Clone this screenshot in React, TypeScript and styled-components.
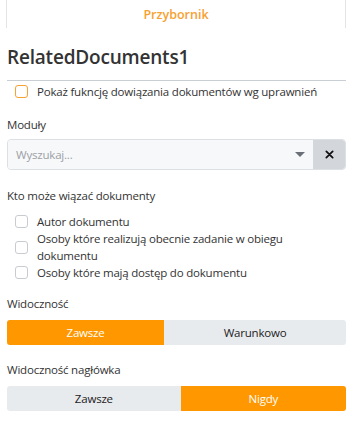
import React from 'react';
import styled, {createGlobalStyle} from 'styled-components';

const GlobalStyle = createGlobalStyle`
  html, body {
    margin: 0;
    padding: 0;
    background: #fff;
  }
  body {
    font-family: 'Open Sans', 'Noto Sans', sans-serif;
    color: #333;
  }
`;

const Panel = styled.div`
  width: 352px;
  height: 427px;
  box-sizing: border-box;
  padding: 0 6px;
  display: flex;
  flex-direction: column;
`;

const TabHeader = styled.div`
  height: 28px;
  border-left: 1px solid #e2e4e7;
  border-right: 1px solid #e2e4e7;
  display: flex;
  align-items: center;
  justify-content: center;
  font-size: 12.5px;
  font-weight: 600;
  color: #f7a131;
`;

const Title = styled.h1`
  margin: 16px 0 0 1px;
  font-size: 19px;
  line-height: 26px;
  font-weight: 600;
  color: #333;
  letter-spacing: -0.2px;
`;

const Divider = styled.hr`
  margin: 10px 0 0 1px;
  border: none;
  border-top: 1px solid #c9ced4;
`;

const CheckRow = styled.label<{$top?: number}>`
  display: flex;
  align-items: center;
  gap: 9px;
  padding-left: 9px;
  margin-top: ${p => p.$top ?? 0}px;
  font-size: 11.5px;
  letter-spacing: -0.2px;
  line-height: 17px;
  color: #333;
`;

const Box = styled.span<{$accent?: boolean}>`
  flex: none;
  width: 11px;
  height: 11px;
  border-radius: 3px;
  border: 1px solid ${p => (p.$accent ? '#f7a131' : '#c8ccd1')};
  background: #fff;
`;

const FieldLabel = styled.div<{$top: number}>`
  margin: ${p => p.$top}px 0 0 1px;
  font-size: 11.5px;
  letter-spacing: -0.2px;
  line-height: 18px;
  color: #333;
`;

const Select = styled.div`
  margin: 5px 0 0 1px;
  height: 31px;
  display: flex;
  border: 1px solid #dcdfe3;
  border-radius: 4px;
  overflow: hidden;
  box-sizing: border-box;
`;

const SelectInput = styled.div`
  flex: 1;
  display: flex;
  align-items: center;
  padding: 0 8px;
  background: #f7f8f9;
  font-size: 11.5px;
  letter-spacing: -0.2px;
  color: #9ba0a6;
`;

const Caret = styled.span`
  margin-left: auto;
  width: 0;
  height: 0;
  border-left: 5px solid transparent;
  border-right: 5px solid transparent;
  border-top: 5px solid #6b7078;
`;

const ClearButton = styled.div`
  width: 32px;
  display: flex;
  align-items: center;
  justify-content: center;
  background: #d3d6db;
`;

const CheckList = styled.div`
  margin-top: 8px;
  padding-right: 22px;
  display: flex;
  flex-direction: column;
`;

const Segmented = styled.div`
  margin: 7px 0 0 1px;
  height: 25px;
  display: flex;
  border-radius: 3px;
  overflow: hidden;
  background: #e8ebee;
`;

const Segment = styled.div<{$active: boolean}>`
  flex: 1 1 auto;
  display: flex;
  align-items: center;
  justify-content: center;
  font-size: 11.5px;
  letter-spacing: -0.2px;
  color: ${p => (p.$active ? '#fff' : '#222')};
  background: ${p => (p.$active ? '#ff9800' : 'transparent')};
`;

const SegmentGroup = ({options, active}: {options: string[]; active: number}) => (
  <Segmented>
    {options.map((o, i) => (
      <Segment key={o} $active={i === active}>
        {o}
      </Segment>
    ))}
  </Segmented>
);

const App = () => {
  return (
    <>
      <GlobalStyle />
      <Panel>
        <TabHeader>Przybornik</TabHeader>
        <Title>RelatedDocuments1</Title>
        <Divider />
        <CheckRow $top={2}>
          <Box $accent />
          Pokaż fukncję dowiązania dokumentów wg uprawnień
        </CheckRow>

        <FieldLabel $top={16}>Moduły</FieldLabel>
        <Select>
          <SelectInput>
            Wyszukaj...
            <Caret />
          </SelectInput>
          <ClearButton>
            <svg width="9" height="9" viewBox="0 0 10 10">
              <path d="M1.5 1.5 L8.5 8.5 M8.5 1.5 L1.5 8.5" stroke="#111" strokeWidth="2" strokeLinecap="round" />
            </svg>
          </ClearButton>
        </Select>

        <FieldLabel $top={17}>Kto może wiązać dokumenty</FieldLabel>
        <CheckList>
          <CheckRow>
            <Box />
            Autor dokumentu
          </CheckRow>
          <CheckRow>
            <Box />
            Osoby które realizują obecnie zadanie w obiegu dokumentu
          </CheckRow>
          <CheckRow>
            <Box />
            Osoby które mają dostęp do dokumentu
          </CheckRow>
        </CheckList>

        <FieldLabel $top={14}>Widoczność</FieldLabel>
        <SegmentGroup options={['Zawsze', 'Warunkowo']} active={0} />

        <FieldLabel $top={16}>Widoczność nagłówka</FieldLabel>
        <SegmentGroup options={['Zawsze', 'Nigdy']} active={1} />
      </Panel>
    </>
  );
};

export default App;
